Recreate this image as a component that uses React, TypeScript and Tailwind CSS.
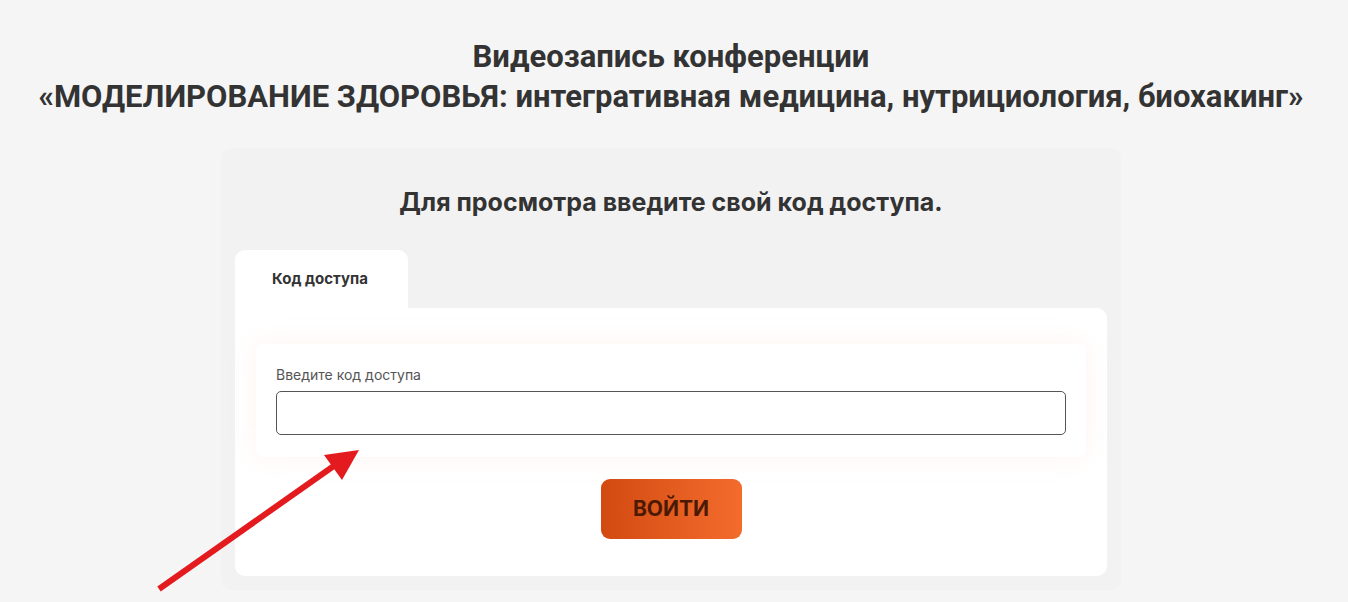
const INTER = "font-['Inter','Noto_Sans',sans-serif]";
const ROBOTO = "font-['Roboto','Noto_Sans',sans-serif]";

function Arrow() {
  return (
    <svg
      className="pointer-events-none absolute left-0 top-0"
      width="1348"
      height="602"
      viewBox="0 0 1348 602"
    >
      <line x1="159" y1="589" x2="338" y2="463" stroke="#e31b1f" strokeWidth="6" />
      <polygon points="359,450 324,455 342,480" fill="#e31b1f" />
    </svg>
  );
}

export default function App() {
  return (
    <div className={`relative h-[602px] overflow-hidden bg-[#f5f5f5] pt-[37px] pr-[6px] ${INTER}`}>
      <h1 className={`text-center text-[31px] leading-[40px] font-bold text-[#333] ${ROBOTO}`}>
        Видеозапись конференции
        <br />
        «МОДЕЛИРОВАНИЕ ЗДОРОВЬЯ: интегративная медицина, нутрициология, биохакинг»
      </h1>

      <div className="mx-auto mt-[31px] w-[900px] rounded-[10px] bg-[#f2f2f2] px-[14px] pb-[14px] pt-[39px]">
        <h2 className="text-center text-[25px] leading-[30px] font-bold text-[#333]">
          Для просмотра введите свой код доступа.
        </h2>

        <div className="mt-[33px] flex">
          <div className="flex h-[58px] w-[173px] items-center rounded-t-[10px] bg-white pl-[37px] text-[15px] font-bold text-[#333]">
            Код доступа
          </div>
        </div>

        <div className="rounded-[10px] rounded-tl-none bg-white px-[21px] pt-[36px] pb-[37px]">
          <div className="rounded-[8px] bg-white px-[20px] pt-[22px] pb-[22px] shadow-[0_0_24px_rgba(250,210,195,0.25)]">
            <label className="block text-[14px] leading-[17px] text-[#555]">
              Введите код доступа
            </label>
            <input
              type="text"
              className="mt-[8px] block h-[44px] w-full rounded-[5px] border border-[#555] bg-white px-3 text-[15px] outline-none"
            />
          </div>

          <div className="mt-[22px] flex justify-center">
            <button className="h-[60px] w-[141px] rounded-[9px] bg-gradient-to-r from-[#d24a0f] to-[#f46c2c] text-[21px] font-bold text-[#4a1a05]">
              ВОЙТИ
            </button>
          </div>
        </div>
      </div>

      <Arrow />
    </div>
  );
}
